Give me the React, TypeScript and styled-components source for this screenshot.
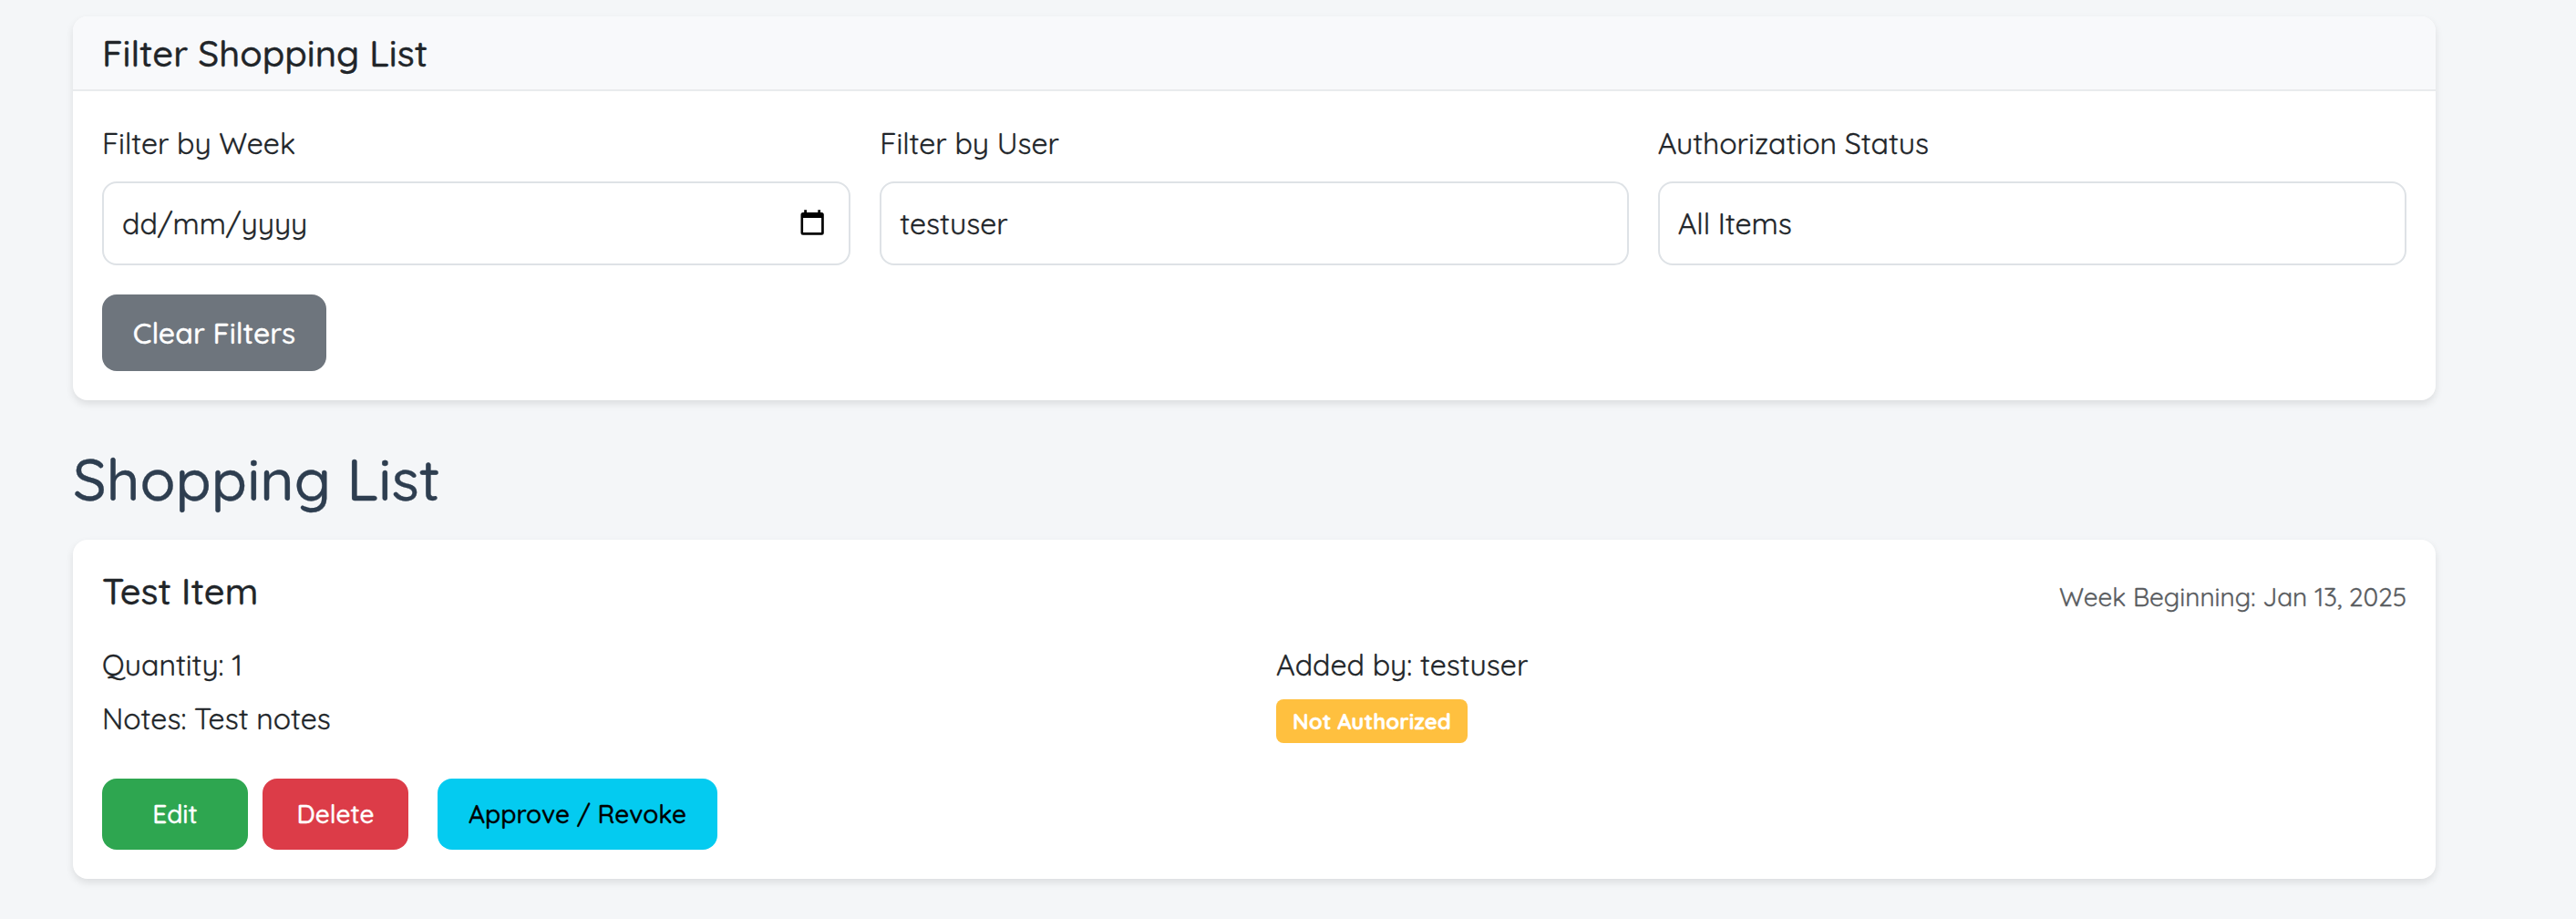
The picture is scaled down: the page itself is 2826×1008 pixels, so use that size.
import React from "react";
import styled, { createGlobalStyle } from "styled-components";

const GlobalStyle = createGlobalStyle`
  *, *::before, *::after { box-sizing: border-box; }
  body {
    margin: 0;
    background: #f4f6f8;
    color: #212529;
    font-family: Quicksand, Lato, "Noto Sans", sans-serif;
    font-size: 32px;
    line-height: 1.6;
    -webkit-text-stroke: 0.35px;
  }
`;

const Page = styled.main`
  width: 2752px;
  height: 1008px;
  padding: 18px 80px 0;
  overflow: hidden;
`;

const Card = styled.section`
  background: #fff;
  border-radius: 16px;
  box-shadow: 0 4px 8px rgba(0, 0, 0, 0.1);
`;

const CardHeader = styled.header`
  height: 82px;
  padding: 16px 32px;
  background: #f8f9fb;
  border-bottom: 2px solid #e9ebed;
  border-radius: 16px 16px 0 0;
`;

const CardTitle = styled.h5`
  margin: 0;
  font-size: 40px;
  font-weight: 500;
  line-height: 48px;
`;

const FilterBody = styled.div`
  padding: 32px;
  height: 339px;
`;

const Filters = styled.div`
  display: grid;
  grid-template-columns: repeat(3, 1fr);
  gap: 32px;
  margin-bottom: 32px;
`;

const Field = styled.div`
  display: flex;
  flex-direction: column;
  gap: 16px;
`;

const Label = styled.label`
  height: 51px;
  line-height: 50px;
`;

const Control = styled.div`
  display: flex;
  align-items: center;
  justify-content: space-between;
  height: 92px;
  padding: 0 27px 0 20px;
  border: 2px solid #dee2e6;
  border-radius: 16px;
  line-height: 48px;
`;

const Button = styled.button<{ $bg: string; $color?: string; $width: number; $large?: boolean }>`
  display: flex;
  align-items: center;
  justify-content: center;
  width: ${(p) => p.$width}px;
  height: ${(p) => (p.$large ? 84 : 78)}px;
  padding: 0;
  border: 0;
  border-radius: 16px;
  background: ${(p) => p.$bg};
  color: ${(p) => p.$color ?? "#fff"};
  font: inherit;
  font-size: ${(p) => (p.$large ? 32 : 28)}px;
  font-weight: 500;
  line-height: ${(p) => (p.$large ? 48 : 42)}px;
  white-space: nowrap;
`;

const SectionTitle = styled.h2`
  margin: 48px 0 29px;
  font-size: 64px;
  font-weight: 500;
  line-height: 76px;
  color: #2e3e50;
`;

const ItemCard = styled(Card)`
  display: flex;
  flex-direction: column;
  height: 372px;
  padding: 32px;
`;

const ItemHeader = styled.div`
  display: flex;
  justify-content: space-between;
  align-items: flex-start;
  height: 79px;
`;

const WeekText = styled.small`
  padding-top: 8px;
  font-size: 28px;
  line-height: 45px;
  color: #595c5f;
`;

const Details = styled.div`
  display: grid;
  grid-template-columns: 1fr 1fr;
  column-gap: 48px;
`;

const Column = styled.div`
  display: flex;
  flex-direction: column;
  align-items: flex-start;
  gap: 7px;
`;

const Line = styled.p`
  margin: 0;
  line-height: 52px;
`;

const Badge = styled.span`
  display: flex;
  align-items: center;
  justify-content: center;
  width: 210px;
  height: 48px;
  margin-top: 5px;
  border-radius: 8px;
  background: #ffc03f;
  color: #fff;
  font-size: 24px;
  font-weight: 700;
`;

const Actions = styled.div`
  display: flex;
  gap: 16px;
  margin-top: auto;
`;

const Approval = styled.div`
  margin-left: 16px;
`;

const PickerIcon = styled.svg`
  display: block;
  margin-bottom: 2px;
`;

const CalendarIcon = () => (
  <PickerIcon width="26" height="28" viewBox="0 0 26 28" aria-hidden="true">
    <path
      fill="#000"
      fillRule="evenodd"
      d="M4.2 0.2h2.8v2.7h12.3V0.2h2.8v2.7h1.2a2.5 2.5 0 0 1 2.5 2.5v19.8a2.5 2.5 0 0 1-2.5 2.5H3a2.5 2.5 0 0 1-2.5-2.5V5.4a2.5 2.5 0 0 1 2.5-2.5h1.2zM3.1 9v16h20V9z"
    />
  </PickerIcon>
);

export default function App() {
  return (
    <>
      <GlobalStyle />
      <Page>
        <Card>
          <CardHeader>
            <CardTitle>Filter Shopping List</CardTitle>
          </CardHeader>
          <FilterBody>
            <Filters>
              <Field>
                <Label>Filter by Week</Label>
                <Control><span>dd/mm/yyyy</span><CalendarIcon /></Control>
              </Field>
              <Field>
                <Label>Filter by User</Label>
                <Control>testuser</Control>
              </Field>
              <Field>
                <Label>Authorization Status</Label>
                <Control>All Items</Control>
              </Field>
            </Filters>
            <Button $bg="#6e757d" $width={246} $large>Clear Filters</Button>
          </FilterBody>
        </Card>
        <SectionTitle>Shopping List</SectionTitle>
        <ItemCard>
          <ItemHeader>
            <CardTitle>Test Item</CardTitle>
            <WeekText>Week Beginning: Jan 13, 2025</WeekText>
          </ItemHeader>
          <Details>
            <Column>
              <Line>Quantity: 1</Line>
              <Line>Notes: Test notes</Line>
            </Column>
            <Column>
              <Line>Added by: testuser</Line>
              <Badge>Not Authorized</Badge>
            </Column>
          </Details>
          <Actions>
            <Button $bg="#2ea650" $width={160}>Edit</Button>
            <Button $bg="#dc3c48" $width={160}>Delete</Button>
            <Approval>
              <Button $bg="#04cbf0" $color="#000" $width={307}>Approve / Revoke</Button>
            </Approval>
          </Actions>
        </ItemCard>
      </Page>
    </>
  );
}
